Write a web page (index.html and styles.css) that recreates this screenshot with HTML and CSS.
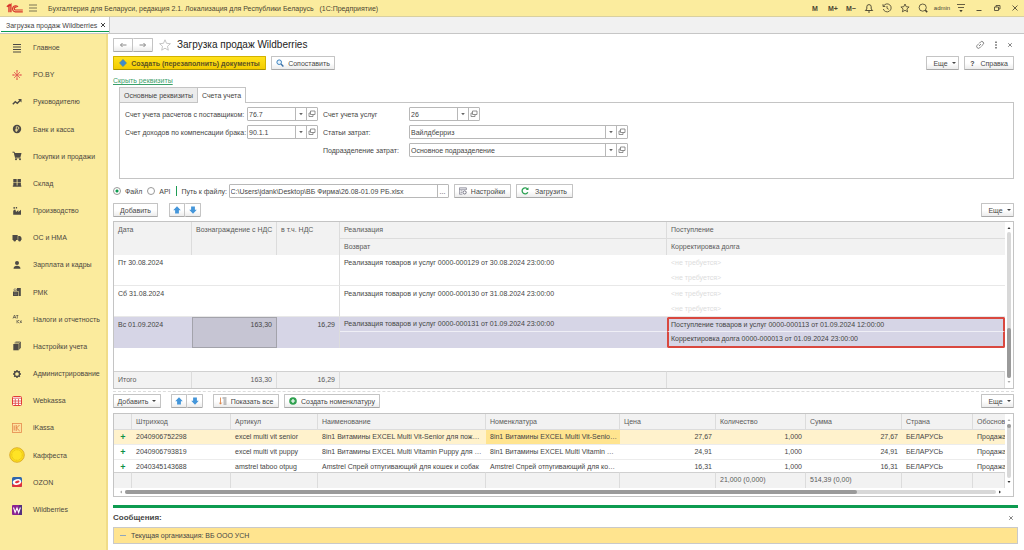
FILE: index.html
```html
<!DOCTYPE html>
<html lang="ru">
<head>
<meta charset="utf-8">
<title>Загрузка продаж Wildberries</title>
<link rel="stylesheet" href="styles.css">
</head>
<body>
<svg class="defs" aria-hidden="true">
  <symbol id="up" viewBox="0 0 8 8"><path d="M4 .3 7.800 4.200H5.900v3.400H2.100V4.200H.2z" fill="#4496da"/></symbol>
  <symbol id="down" viewBox="0 0 8 8"><path d="M4 7.700 7.800 3.800H5.900V.4H2.100v3.400H.2z" fill="#4496da"/></symbol>
  <symbol id="open" viewBox="0 0 8 8"><path d="M2.500 1h4.500v3.500h-4.500zM2.500 3H1v3.500h4V4.500" fill="none" stroke="#777" stroke-width=".8"/></symbol>
  <symbol id="caret" viewBox="0 0 8 8"><path d="M2.200 3h3.600L4 5.200z" fill="#666"/></symbol>
</svg>
<header class="titlebar">
  <svg class="logo" viewBox="0 0 16 10"><path d="M.8 3.400 2.800 1.700V8.500M4.600 8.500V1.200L2 3.300" fill="none" stroke="#d8322a" stroke-width="1.300"/><path d="M11.300 3.500A2.900 2.900 0 1 0 8.700 8.200H15.800M10 3.900A1.400 1.400 0 1 0 8.800 6.400H15.800" fill="none" stroke="#d8322a" stroke-width="1.100"/></svg>
  <button class="bare" aria-label="Меню"><svg class="i10" viewBox="0 0 10 10"><path d="M1 2h8M1 5h8M1 8h8" stroke="#7b7454"/></svg></button>
  <span class="app-name">Бухгалтерия для Беларуси, редакция 2.1. Локализация для Республики Беларусь &nbsp; (1С:Предприятие)</span>
  <nav class="tools">
    <button>M</button><button>M+</button><button>M−</button>
    <button aria-label="Уведомления"><svg class="i10" viewBox="0 0 10 10"><path d="M1.300 7.500 2.800 6V3.800a2.200 2.200 0 0 1 4.400 0V6l1.500 1.500z" fill="none" stroke="#554f38"/><path d="M4 9h2" stroke="#554f38"/></svg></button>
    <button aria-label="История"><svg class="i10" viewBox="0 0 10 10"><path d="M1.500 3.200A4 4 0 1 1 1.300 6M1 1.200v2.300h2.300M5 3v2.300l1.700 1" fill="none" stroke="#554f38" stroke-width=".9"/></svg></button>
    <button aria-label="Избранное"><svg class="i10" viewBox="0 0 10 10"><path d="m5 1 1.200 2.700 2.900.3-2.200 1.900.7 2.900L5 7.300 2.400 8.800l.7-2.900L.9 4l2.900-.3z" fill="none" stroke="#554f38" stroke-width=".9"/></svg></button>
    <button aria-label="Поиск"><svg class="i10" viewBox="0 0 10 10"><circle cx="4.700" cy="4.600" r="3.600" fill="none" stroke="#554f38" stroke-width=".9"/><path d="m7.300 7.200 1.900 1.900" stroke="#443f2c" stroke-width="1.500"/></svg></button>
    <button class="user">admin</button>
    <button aria-label="Настройки"><svg class="i10" viewBox="0 0 10 10"><path d="M1 1.500h8M2 4.500h6" stroke="#554f38" stroke-width=".9"/><path d="M3.300 7h3.400L5 9.200z" fill="#443f2c"/></svg></button>
    <button aria-label="Свернуть"><svg class="i10" viewBox="0 0 10 10"><path d="M2.500 7.500h5" stroke="#554f38"/></svg></button>
    <button aria-label="Развернуть"><svg class="i10" viewBox="0 0 10 10"><path d="M2.500 4h4v3.500h-4zM4 4V2.500h4V6H6.500" fill="none" stroke="#554f38" stroke-width=".9"/></svg></button>
    <button aria-label="Закрыть"><svg class="i10" viewBox="0 0 10 10"><path d="m2.500 2.500 5 5m0-5-5 5" stroke="#554f38" stroke-width=".9"/></svg></button>
  </nav>
</header>
<div class="tabbar"><div class="wtab"><span>Загрузка продаж Wildberries</span><button class="bare" aria-label="Закрыть вкладку"><svg class="i6" viewBox="0 0 6 6"><path d="m1 1 4 4m0-4L1 5" stroke="#444"/></svg></button></div></div>
<div class="workspace">
  <nav class="sidebar">
    <a href="#"><svg viewBox="0 0 16 16"><path d="M4 4.500h8M4 7h8M4 9.500h8M4 12h8" stroke="#4d4a45" stroke-width="1.200"/></svg>Главное</a>
    <a href="#"><svg viewBox="0 0 16 16"><path d="M8 3.800v8.400M5 5l6 6M11 5l-6 6M4 8h8" stroke="#e2574f" stroke-width=".8"/><path d="M7 3.800h2M7 12.200h2M4 7v2M12 7v2" stroke="#e2574f" stroke-width=".8"/></svg>PO.BY</a>
    <a href="#"><svg viewBox="0 0 16 16"><path d="m3.800 10.300 2.500-2.600 2 1.600 3-3" fill="none" stroke="#4d4a45" stroke-width="1.400"/><path d="M9 5h3.500v3.500z" fill="#4d4a45"/></svg>Руководителю</a>
    <a href="#"><svg viewBox="0 0 16 16"><circle cx="8" cy="8" r="4.200" fill="#4d4a45"/><path d="M7.300 11V5.700h1.200a1.300 1.300 0 0 1 0 2.700H6.300M6.300 9.600h2.500" fill="none" stroke="#fbe99c" stroke-width=".8"/></svg>Банк и касса</a>
    <a href="#"><svg viewBox="0 0 16 16"><path d="M3.500 4.200h1.800l1.200 5.600h5" fill="none" stroke="#4d4a45"/><path d="M5.300 5h7.200l-1 4H6.200z" fill="#4d4a45"/><circle cx="7" cy="11.300" r="1" fill="#4d4a45"/><circle cx="11" cy="11.300" r="1" fill="#4d4a45"/></svg>Покупки и продажи</a>
    <a href="#"><svg viewBox="0 0 16 16"><path d="M4.300 4h3.400v3.200H4.300zM8.500 4h3.400v3.200H8.500zM4.300 7.800h3.400v2.700H4.300zM8.500 7.800h3.400v2.700H8.500zM3.800 10.500h8.500v1.200H3.800z" fill="#4d4a45"/></svg>Склад</a>
    <a href="#"><svg viewBox="0 0 16 16"><path d="M4.200 11.800V8L5 6.800h1.500L7 9l2.300-2v2L12 6.800v5zM4.500 4h1.300v1.800H4.500zM6.800 4h1.300v1.500H6.800z" fill="#4d4a45"/></svg>Производство</a>
    <a href="#"><svg viewBox="0 0 16 16"><path d="M3.500 5h5.200v5H3.500zM9.200 6h2l1.300 1.800V10H9.200z" fill="#4d4a45"/><circle cx="5.700" cy="10.300" r="1.200" fill="#4d4a45"/><circle cx="10.600" cy="10.300" r="1.200" fill="#4d4a45"/></svg>ОС и НМА</a>
    <a href="#"><svg viewBox="0 0 16 16"><circle cx="8" cy="6" r="2" fill="#4d4a45"/><path d="M4.500 11.700c0-2 1.500-3 3.500-3s3.500 1 3.500 3z" fill="#4d4a45"/></svg>Зарплата и кадры</a>
    <a href="#"><svg viewBox="0 0 16 16"><path d="M4 7.500h5V12H4zM8 4h3.800v8H9.500V7H8z" fill="#4d4a45"/><path d="M5 6.500h2.500V5H5zM5 9h3M5 10.500h3" fill="none" stroke="#77726a" stroke-width=".7"/></svg>РМК</a>
    <a href="#"><svg viewBox="0 0 16 16"><path d="m4 7.500 1.500-3.500L7 7.500M4.500 6.500h2M7.300 4.500h2M8.300 4.500v3M8 9v3.300M10 9 8.500 10.600l1.700 1.700M11 9.500l1.700 2.500M12.500 9.500 11 12" fill="none" stroke="#4d4a45" stroke-width=".7"/></svg>Налоги и отчетность</a>
    <a href="#"><svg viewBox="0 0 16 16"><path d="M4.300 6h5.400v6.300H4.300z" fill="#4d4a45"/><path d="M5.500 5h5v6.300M6.500 4h5v6.300" fill="none" stroke="#4d4a45" stroke-width=".8"/></svg>Настройки учета</a>
    <a href="#"><svg viewBox="0 0 16 16"><circle cx="8" cy="8" r="2.500" fill="none" stroke="#4d4a45" stroke-width="1.300"/><path d="M8 4v1.500M8 10.500V12M4 8h1.500M10.500 8H12M5.200 5.200l1 1M9.800 9.800l1 1M10.800 5.200l-1 1M6.200 9.800l-1 1" stroke="#4d4a45" stroke-width="1.400"/></svg>Администрирование</a>
    <a href="#"><svg viewBox="0 0 16 16"><rect x="3.500" y="3.500" width="9" height="9" rx="1" fill="#fff" stroke="#e23b36"/><path d="M4 5.200h8M4 8h8M4 10.300h8M6.300 6v6M9.500 6v6" stroke="#e2554f" stroke-width=".9"/></svg>Webkassa</a>
    <a href="#"><svg viewBox="0 0 16 16"><rect x="3.500" y="3.500" width="9" height="9" fill="#fde3a0" stroke="#e58a4e" stroke-width=".8"/><path d="M5.200 5.500v5M7.200 5v6M10.500 5 7.500 8l3.200 3" fill="none" stroke="#df7438" stroke-width=".8"/></svg>iKassa</a>
    <a href="#"><svg viewBox="0 0 16 16"><circle cx="8" cy="8" r="7.300" fill="#fbdc1c" stroke="#d9a92a" stroke-width=".9"/><circle cx="8" cy="8" r="5.200" fill="#ffe325" stroke="#e0b418" stroke-width=".7" stroke-dasharray="1 .6"/></svg>Каффеста</a>
    <a href="#"><svg viewBox="0 0 16 16"><rect x="3" y="3" width="10" height="10" rx="1.500" fill="#2f66ac"/><path d="M3 10.500 13 8v3.500a1.500 1.500 0 0 1-1.500 1.500h-7A1.500 1.500 0 0 1 3 11.500z" fill="#e0323c"/><ellipse cx="8" cy="8" rx="4.300" ry="2.800" fill="#fff" transform="rotate(-15 8 8)"/><ellipse cx="8.300" cy="8" rx="2.300" ry="1.200" fill="#e0323c" transform="rotate(-15 8 8)"/></svg>OZON</a>
    <a href="#"><svg viewBox="0 0 16 16"><rect x="3" y="3" width="10" height="10" rx="1" fill="#8a2391"/><path d="M10 3h3v10h-3z" fill="#55307f"/><path d="m4.500 5.500 1.600 5L8 6l1.700 4.500 1.700-5" fill="none" stroke="#fff" stroke-width="1.100"/></svg>Wildberries</a>
  </nav>
  <main>
    <div class="form">
      <div class="row heading">
        <div class="pair"><button class="btn nav" aria-label="Назад"><svg class="i8" viewBox="0 0 8 8"><path d="M7.500 4h-6M3.500 2l-2 2 2 2" fill="none" stroke="#8a8a8a"/></svg></button><button class="btn nav" aria-label="Вперед"><svg class="i8" viewBox="0 0 8 8"><path d="M.5 4h6M4.500 2l2 2-2 2" fill="none" stroke="#8a8a8a"/></svg></button></div>
        <button class="bare" aria-label="В избранное"><svg class="star" viewBox="0 0 12 12"><path d="m6 .8 1.500 3.500 3.900.4-2.900 2.600.8 3.900L6 9.200l-3.300 2 .8-3.900L.6 4.700l3.900-.4z" fill="#fff" stroke="#b8b8b8" stroke-width=".8"/></svg></button>
        <h1>Загрузка продаж Wildberries</h1>
        <div class="window-tools">
          <button class="bare" aria-label="Ссылка"><svg class="i10" viewBox="0 0 10 10"><path d="M4 3.500 5.500 2a1.800 1.800 0 0 1 2.600 2.500L6.500 6M6 6.500 4.500 8A1.800 1.800 0 0 1 2 5.500L3.500 4M4 6l2-2" fill="none" stroke="#666" stroke-width=".8"/></svg></button>
          <button class="bare" aria-label="Действия"><svg class="i10" viewBox="0 0 10 10"><path d="M4.300 1.500h1.400V3H4.300zM4.300 4.200h1.400v1.500H4.300zM4.300 7h1.400v1.500H4.300z" fill="#555"/></svg></button>
          <button class="bare" aria-label="Закрыть"><svg class="i6" viewBox="0 0 6 6"><path d="m1.200 1.200 3.600 3.600m0-3.600L1.200 4.800" stroke="#666" stroke-width=".8"/></svg></button>
        </div>
      </div>
      <div class="row commands">
        <button class="btn primary"><svg class="i8" viewBox="0 0 8 8"><path d="M4 .3 7.700 4 4 7.700.3 4z" fill="#3f8ccc" stroke="#7a8a5a" stroke-width=".4"/></svg>Создать (перезаполнить) документы</button>
        <button class="btn compare"><svg class="i8" viewBox="0 0 8 8"><circle cx="3.200" cy="3.200" r="2.300" fill="#e8f3fc" stroke="#3a80bd"/><path d="m5 5 2.400 2.400" stroke="#3a6fa5" stroke-width="1.400"/></svg>Сопоставить</button>
        <span class="grow"></span>
        <button class="btn more">Еще<i class="tri"></i></button>
        <button class="btn help"><b>?</b>Справка</button>
      </div>
      <div class="linkrow"><a href="#" class="toggle">Скрыть реквизиты</a></div>
      <section class="tabs">
        <div class="tablist" role="tablist"><button role="tab">Основные реквизиты</button><button role="tab" class="active" aria-selected="true">Счета учета</button></div>
        <div class="panel">
          <div class="fields">
            <label for="f1">Счет учета расчетов с поставщиком:</label>
            <div class="combo short"><input id="f1" value="76.7"><button aria-label="Выбрать"><svg class="i8"><use href="#caret"/></svg></button><button aria-label="Открыть"><svg class="i8"><use href="#open"/></svg></button></div>
            <label for="f2">Счет доходов по компенсации брака:</label>
            <div class="combo short"><input id="f2" value="90.1.1"><button aria-label="Выбрать"><svg class="i8"><use href="#caret"/></svg></button><button aria-label="Открыть"><svg class="i8"><use href="#open"/></svg></button></div>
          </div>
          <div class="fields second">
            <label for="f3">Счет учета услуг</label>
            <div class="combo short"><input id="f3" value="26"><button aria-label="Выбрать"><svg class="i8"><use href="#caret"/></svg></button><button aria-label="Открыть"><svg class="i8"><use href="#open"/></svg></button></div>
            <label for="f4">Статьи затрат:</label>
            <div class="combo"><input id="f4" value="Вайлдберриз"><button aria-label="Выбрать"><svg class="i8"><use href="#caret"/></svg></button><button aria-label="Открыть"><svg class="i8"><use href="#open"/></svg></button></div>
            <label for="f5">Подразделение затрат:</label>
            <div class="combo"><input id="f5" value="Основное подразделение"><button aria-label="Выбрать"><svg class="i8"><use href="#caret"/></svg></button><button aria-label="Открыть"><svg class="i8"><use href="#open"/></svg></button></div>
          </div>
        </div>
      </section>
      <div class="row source">
        <label class="radio"><input type="radio" name="src" checked>Файл</label>
        <label class="radio"><input type="radio" name="src">API</label>
        <span class="bar"></span>
        <label for="path" class="path-label">Путь к файлу:</label>
        <div class="combo path"><input id="path" value="C:\Users\jdank\Desktop\ВБ Фирма\26.08-01.09 РБ.xlsx"><button aria-label="Обзор">...</button></div>
        <button class="btn settings"><svg class="i8" viewBox="0 0 8 8"><path d="M.4.800h7v2M.4.800v6.400h3M.4 2.300h7M1.500 3.800h2M1.500 5.400h1.500" fill="none" stroke="#778" stroke-width=".7"/><circle cx="5.600" cy="5.400" r="1.600" fill="#fff" stroke="#667" stroke-width=".9"/></svg>Настройки</button>
        <button class="btn load"><svg class="i8" viewBox="0 0 8 8"><path d="M6.600 2.200A3 3 0 1 0 6.800 5.200" fill="none" stroke="#2aa052" stroke-width="1.300"/><path d="M4.800 2.900h2.700V.3z" fill="#2aa052"/></svg>Загрузить</button>
      </div>
      <div class="row bar1">
        <button class="btn add">Добавить</button>
        <div class="pair arrows"><button class="btn" aria-label="Вверх"><svg class="i8"><use href="#up"/></svg></button><button class="btn" aria-label="Вниз"><svg class="i8"><use href="#down"/></svg></button></div>
        <span class="grow"></span>
        <button class="btn more">Еще<i class="tri"></i></button>
      </div>
      <div class="grid">
        <div class="grid-main">
          <table class="days">
            <colgroup><col class="d1"><col class="d2"><col class="d3"><col class="d4"><col></colgroup>
            <thead>
              <tr><th rowspan="2">Дата</th><th rowspan="2" class="tight">Вознаграждение с НДС</th><th rowspan="2">в т.ч. НДС</th><th class="line">Реализация</th><th class="line">Поступление</th></tr>
              <tr><th>Возврат</th><th>Корректировка долга</th></tr>
            </thead>
            <tbody>
              <tr><td rowspan="2" class="end">Пт 30.08.2024</td><td rowspan="2" class="end"></td><td rowspan="2" class="end edge"></td><td>Реализация товаров и услуг 0000-000129 от 30.08.2024 23:00:00</td><td class="none">&lt;не требуется&gt;</td></tr>
              <tr><td class="end"></td><td class="end none">&lt;не требуется&gt;</td></tr>
              <tr><td rowspan="2" class="end">Сб 31.08.2024</td><td rowspan="2" class="end"></td><td rowspan="2" class="end edge"></td><td>Реализация товаров и услуг 0000-000130 от 31.08.2024 23:00:00</td><td class="none">&lt;не требуется&gt;</td></tr>
              <tr><td class="end"></td><td class="end none">&lt;не требуется&gt;</td></tr>
              <tr class="sel"><td rowspan="2">Вс 01.09.2024</td><td rowspan="2" class="num cur">163,30</td><td rowspan="2" class="num edge">16,29</td><td class="under">Реализация товаров и услуг 0000-000131 от 01.09.2024 23:00:00</td><td class="mark-top">Поступление товаров и услуг 0000-000113 от 01.09.2024 12:00:00</td></tr>
              <tr class="sel"><td></td><td class="mark-bottom">Корректировка долга 0000-000013 от 01.09.2024 23:00:00</td></tr>
            </tbody>
            <tfoot>
              <tr class="filler"><td colspan="5"></td></tr>
              <tr class="sum"><td>Итого</td><td class="num">163,30</td><td class="num">16,29</td><td></td><td></td></tr>
            </tfoot>
          </table>
        </div>
        <div class="vscroll"><svg class="i8" viewBox="0 0 8 8"><path d="M2.500 5h3L4 3z" fill="#333"/></svg><div class="track"><div class="thumb low"></div></div><svg class="i8" viewBox="0 0 8 8"><path d="M2.500 3h3L4 5z" fill="#aaa"/></svg></div>
      </div>
      <div class="splitter"></div>
      <div class="row bar2">
        <button class="btn add2">Добавить<i class="tri"></i></button>
        <div class="pair arrows"><button class="btn" aria-label="Вверх"><svg class="i8"><use href="#up"/></svg></button><button class="btn" aria-label="Вниз"><svg class="i8"><use href="#down"/></svg></button></div>
        <button class="btn showall"><svg class="i8" viewBox="0 0 8 8"><path d="M1.500.5v6.500M.3 5.600l1.200 1.600 1.200-1.600" fill="none" stroke="#d87a3a" stroke-width=".8"/><path d="M3.500 1h4M4.500 3h3M4.500 5h3M4.500 7h3" stroke="#777" stroke-width=".9"/></svg>Показать все</button>
        <button class="btn create"><svg class="i8" viewBox="0 0 8 8"><circle cx="4" cy="4" r="3.800" fill="#2fa04f"/><path d="M4 1.900v4.200M1.900 4h4.200" stroke="#fff" stroke-width="1.200"/></svg>Создать номенклатуру</button>
        <span class="grow"></span>
        <button class="btn more">Еще<i class="tri"></i></button>
      </div>
      <div class="grid goods">
        <div class="grid-main">
          <div class="viewport">
            <table class="items">
              <colgroup><col class="c1"><col class="c2"><col class="c3"><col class="c4"><col class="c5"><col class="c6"><col class="c7"><col class="c8"><col class="c9"><col></colgroup>
              <thead><tr><th></th><th>Штрихкод</th><th>Артикул</th><th>Наименование</th><th>Номенклатура</th><th>Цена</th><th>Количество</th><th>Сумма</th><th>Страна</th><th class="tight">Обоснова</th></tr></thead>
              <tbody>
                <tr class="hot"><td class="plus">+</td><td>2040906752298</td><td>excel multi vit senior</td><td class="tight">8in1 Витамины EXCEL Multi Vit-Senior для пож…</td><td class="tight cell">8in1 Витамины EXCEL Multi Vit-Senio…</td><td class="num">27,67</td><td class="num">1,000</td><td class="num">27,67</td><td>БЕЛАРУСЬ</td><td class="tight">Продажа</td></tr>
                <tr><td class="plus">+</td><td>2040906793819</td><td>excel multi vit puppy</td><td class="tight">8in1 Витамины EXCEL Multi Vitamin Puppy для …</td><td class="tight">8in1 Витамины EXCEL Multi Vitamin …</td><td class="num">24,91</td><td class="num">1,000</td><td class="num">24,91</td><td>БЕЛАРУСЬ</td><td class="tight">Продажа</td></tr>
                <tr><td class="plus">+</td><td>2040345143688</td><td>amstrel taboo otpug</td><td class="tight">Amstrel Спрей отпугивающий для кошек и собак</td><td class="tight">Amstrel Спрей отпугивающий для ко…</td><td class="num">16,31</td><td class="num">1,000</td><td class="num">16,31</td><td>БЕЛАРУСЬ</td><td class="tight">Продажа</td></tr>
              </tbody>
            </table>
          </div>
          <table class="items totals">
            <colgroup><col class="c1"><col class="c2"><col class="c3"><col class="c4"><col class="c5"><col class="c6"><col class="c7"><col class="c8"><col class="c9"><col></colgroup>
            <tbody><tr><td></td><td></td><td></td><td></td><td></td><td></td><td>21,000 (0,000)</td><td>514,39 (0,00)</td><td></td><td></td></tr></tbody>
          </table>
        </div>
        <div class="vscroll"><svg class="i8" viewBox="0 0 8 8"><path d="M2.500 5h3L4 3z" fill="#aaa"/></svg><div class="track"><div class="thumb dot"></div></div><svg class="i8" viewBox="0 0 8 8"><path d="M2.500 3h3L4 5z" fill="#333"/></svg></div>
        <div class="hscroll"><svg class="i8" viewBox="0 0 8 8"><path d="M5 2.500v3L3 4z" fill="#aaa"/></svg><div class="track"><div class="thumb wide"></div></div><svg class="i8" viewBox="0 0 8 8"><path d="M3 2.500v3L5 4z" fill="#333"/></svg></div>
      </div>
    </div>
    <section class="messages">
      <div class="msg-head"><h2>Сообщения:</h2><button class="bare" aria-label="Закрыть сообщения"><svg class="i6" viewBox="0 0 6 6"><path d="m1.200 1.200 3.600 3.600m0-3.600L1.200 4.800" stroke="#666" stroke-width=".8"/></svg></button></div>
      <div class="msg"><span class="dash"></span>Текущая организация: ВБ ООО УСН</div>
    </section>
  </main>
</div>
</body>
</html>
```
FILE: styles.css
```css
* { box-sizing: border-box; }
body { margin: 0; min-height: 100vh; display: flex; flex-direction: column; background: #fff; color: #454545; font: 7px/9px "Liberation Sans", Arial, sans-serif; }
button, input { font: inherit; color: inherit; margin: 0; padding: 0; }
button { border: 0; background: none; white-space: nowrap; }
svg { display: block; flex: none; }
.defs { position: absolute; width: 0; height: 0; }
.i10 { width: 10px; height: 10px; }
.i8 { width: 8px; height: 8px; }
.i6 { width: 6px; height: 6px; }
.bare { display: flex; align-items: center; justify-content: center; }
.grow { flex: 1; }

.titlebar { height: 17px; display: flex; align-items: center; background: #fbec9e; border-bottom: 1px solid #d9d0a0; padding-left: 6px; color: #4b4632; }
.logo { width: 17px; height: 11px; margin-right: 5px; }
.app-name { margin-left: 10px; white-space: nowrap; }
.tools { margin-left: auto; display: flex; }
.tools button { width: 18px; display: flex; justify-content: center; align-items: center; font-weight: 700; }
.tools .user { width: 20px; font-size: 6px; font-weight: 400; }
.tabbar { height: 17px; display: flex; background: #f1f1f1; border-bottom: 1px solid #c6c6c6; }
.wtab { display: flex; align-items: center; gap: 3px; padding: 0 3px 0 5px; background: #fff; border-right: 1px solid #c6c6c6; box-shadow: inset 0 -1px #fff, inset 0 -2px #0d9b50; border-left: 1px solid #fff; }

.workspace { flex: 1; display: flex; }
.sidebar { width: 108px; flex: none; display: flex; flex-direction: column; padding-bottom: 27px; background: #fbeb9d; border-right: 2px solid #f0dc88; }
.sidebar a { flex: 1; display: flex; align-items: center; gap: 8px; padding-left: 9px; color: #4b4740; text-decoration: none; white-space: nowrap; }
.sidebar svg { width: 16px; height: 16px; }
main { flex: 1; min-width: 0; display: flex; flex-direction: column; padding: 0 6px 0 5px; }
.form { padding: 4px 4px 0 0; }

.row { display: flex; align-items: center; height: 14px; }
.btn { height: 14px; display: flex; align-items: center; justify-content: center; gap: 6px; border: 1px solid #c4c4c4; border-bottom-color: #a8a8a8; border-radius: 1px; background: linear-gradient(#fff, #fff 50%, #ececec); }
.pair { display: flex; }
.pair .btn + .btn { border-left: 0; }
.nav { width: 20px; }
.arrows .btn { width: 16px; }
.star { width: 12px; height: 12px; margin: 0 6px; }
h1 { margin: 0; font-size: 10px; line-height: 14px; font-weight: 400; color: #222; }
.window-tools { margin-left: auto; display: flex; gap: 6px; padding-right: 1px; }
.commands { margin-top: 4px; gap: 5px; }
.primary { width: 153px; gap: 4px; background: linear-gradient(#ffe11c, #f3cc00); border-color: #d2b200; border-bottom-color: #a88f00; font-weight: 700; color: #5c5222; }
.compare { width: 64px; gap: 4px; }
.more { width: 33px; gap: 4px; padding-left: 4px; }
.help { width: 50px; }
.tri { width: 0; height: 0; border: 2px solid transparent; border-top-color: #444; border-bottom: 0; }
.linkrow { height: 17px; padding-top: 6px; }
.toggle { color: #3aa06a; text-decoration: underline; }

.tabs { margin-left: 6px; }
.tablist { display: flex; }
.tablist button { height: 15px; padding: 0 4px; border: 1px solid #c4c4c4; border-bottom: 0; background: #ececec; }
.tablist .active { background: #fff; border-left: 0; height: 16px; margin-bottom: -1px; position: relative; }
.panel { display: flex; gap: 5px; padding: 4px 5px 21px; border: 1px solid #c4c4c4; }
.fields { display: grid; grid-template-columns: 122px auto; grid-auto-rows: 14px; row-gap: 4px; align-items: center; align-content: start; }
.second { grid-template-columns: 86px 219px; }
.combo { display: flex; height: 14px; border: 1px solid #b8b8b8; border-radius: 1px; background: #fff; }
.combo input { flex: 1; min-width: 0; width: 0; border: 0; outline: 0; padding: 0 1px; background: none; }
.combo button { width: 11px; border-left: 1px solid #b8b8b8; display: flex; align-items: center; justify-content: center; }
.short { width: 71px; }

.source { margin-top: 5px; }
.radio { display: flex; align-items: center; gap: 4px; margin-right: 5px; }
.radio input { appearance: none; width: 8px; height: 8px; border: 1px solid #999; border-radius: 50%; }
.radio input:checked { background: radial-gradient(circle, #0d9b50 0 1px, #fff 2px); }
.bar { width: 1px; height: 10px; background: #1f9c55; }
.path-label { width: 52px; padding-left: 5px; }
.path { width: 220px; margin-right: 5px; }
.settings { width: 57px; margin-right: 5px; gap: 4px; }
.load { width: 57px; }
.bar1 { margin: 5px 0 4px; }
.add { width: 45px; margin-right: 11px; }
.bar2 { margin-bottom: 5px; }
.add2 { width: 48px; margin-right: 10px; gap: 4px; }
.showall { width: 66px; margin: 0 5px 0 10px; gap: 4px; }
.create { width: 96px; gap: 4px; }

.grid { display: grid; grid-template-columns: minmax(0, 1fr) 8px; border: 1px solid #c4c4c4; }
table { width: 100%; table-layout: fixed; border-collapse: separate; border-spacing: 0; }
th, td { padding: 0 4px; text-align: left; vertical-align: top; font-weight: 400; line-height: 15px; white-space: nowrap; overflow: hidden; text-overflow: ellipsis; }
th, .sum td, .totals td { background: #f2f2f2; border-right: 1px solid #dcdcdc; color: #5a5a5a; line-height: 16px; }
th:last-child { border-right: 0; }
.tight { text-overflow: clip; padding-right: 0; }
.num { text-align: right; }
.d1 { width: 78px; }
.d2 { width: 85px; }
.d3 { width: 63px; }
.d4 { width: 327px; }
.days thead tr { height: 17px; }
.days thead tr + tr { height: 16px; }
.days .line { border-bottom: 1px solid #dcdcdc; }
.days tbody tr:nth-child(odd) { height: 15px; }
.days tbody tr:nth-child(even) { height: 16px; }
.end { border-bottom: 1px solid #e8e8e8; }
.edge { border-right: 1px solid #dcdcdc; }
.none { color: #dcdcdc; }
.sel td { background: #d6d5e6; }
.sel .cur { background: #c6c5d3; border: 1px solid #a3a3ab; line-height: 13px; }
.sel .under { border-bottom: 1px solid #efeff6; line-height: 14px; }
.sel .mark-top { border: 2px solid #d9483f; border-bottom: 1px solid #efeff6; border-radius: 2px 2px 0 0; line-height: 12px; padding: 0 2px; }
.sel .mark-bottom { border: 2px solid #d9483f; border-top: 0; border-radius: 0 0 2px 2px; line-height: 14px; padding: 0 2px; }
.filler { height: 23px; }
.sum td { border-top: 1px solid #d0d0d0; }
.sum { height: 17px; }
.vscroll { display: flex; flex-direction: column; padding: 2px 0; }
.track { flex: 1; background: #d8d8d8; border-radius: 2px; display: flex; }
.vscroll .track { width: 4px; margin: 0 2px; flex-direction: column; }
.thumb { background: #9a9a9a; border-radius: 2px; }
.low { margin-top: auto; height: 34%; }
.dot { height: 4px; }
.splitter { height: 2px; margin: 2px 0 1px; border-top: 1px dashed #dcdcdc; }

.c1 { width: 18px; }
.c2 { width: 99px; }
.c3 { width: 87px; }
.c4 { width: 168px; }
.c5 { width: 134px; }
.c6 { width: 96px; }
.c7 { width: 90px; }
.c8 { width: 96px; }
.c9 { width: 71px; }
.viewport { height: 58px; overflow: hidden; }
.items th { height: 16px; border-bottom: 1px solid #dcdcdc; line-height: 15px; }
.items tbody td { border-bottom: 1px solid #ececec; line-height: 14px; }
.items .plus { color: #0d8f45; font-weight: 700; font-size: 9px; text-align: center; text-overflow: clip; }
.items .hot td { background: #fff2cc; }
.items .hot .cell { background: #ffe48f; }
.items.totals td { height: 16px; border-top: 1px solid #d0d0d0; border-bottom: 0; }
.hscroll { grid-column: 1 / -1; display: flex; align-items: center; height: 8px; padding: 0 9px 0 3px; }
.hscroll .track { height: 4px; }
.wide { width: 84%; }

.messages { margin-top: 8px; border-top: 3px solid #0d9b50; }
.msg-head { height: 19px; display: flex; align-items: center; justify-content: space-between; padding-right: 4px; }
h2 { margin: 0; font-size: 8px; line-height: 10px; font-weight: 700; }
.msg { height: 17px; display: flex; align-items: center; gap: 5px; padding-left: 6px; background: #ffe48f; border: 1px solid #c9c9c9; }
.dash { width: 6px; height: 1px; background: #8fa6bd; }
```
